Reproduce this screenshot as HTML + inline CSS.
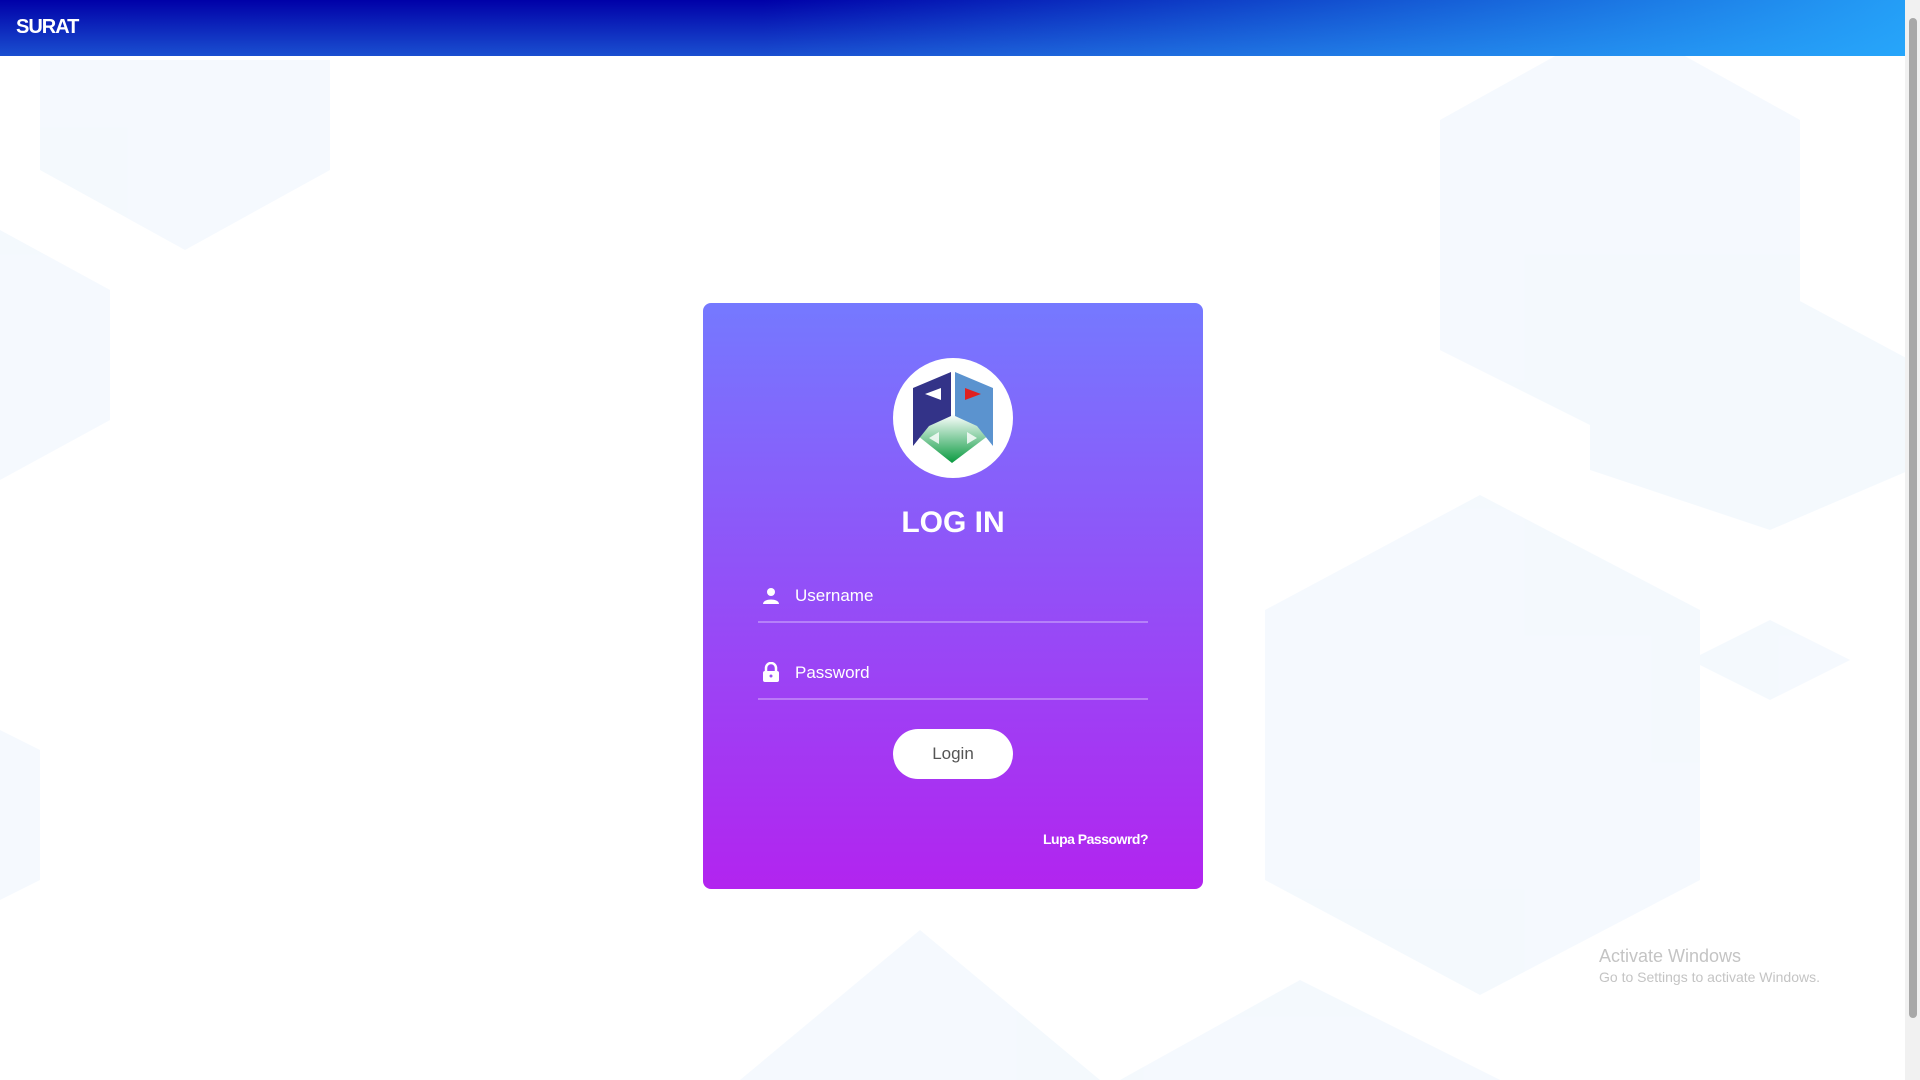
<!DOCTYPE html>
<html><head><meta charset="utf-8"><style>
*{margin:0;padding:0;box-sizing:border-box}
body{width:1920px;height:1080px;overflow:hidden;background:#fff;font-family:"Liberation Sans",sans-serif;position:relative}
.hdr{position:absolute;left:0;top:0;width:1905px;height:56px;background:linear-gradient(180deg,#0000a8 0%,#1a4fd0 100%);}
.hdr:after{content:"";position:absolute;inset:0;background:linear-gradient(90deg,rgba(0,0,0,0) 40%,rgba(40,175,255,.9) 100%)}
.hdr span{position:absolute;left:16px;top:16px;color:#fff;font-weight:bold;font-size:20px;letter-spacing:-1px;z-index:2}
.sb{position:absolute;right:0;top:0;width:15px;height:1080px;background:#f1f1f1}
.sb div{position:absolute;left:4px;top:18px;width:8px;height:1000px;background:#a8a8a8;border-radius:4px}
.card{position:absolute;left:703px;top:303px;width:500px;height:586px;border-radius:8px;background:linear-gradient(180deg,#7579ff 0%,#b224ef 100%)}
.logo{position:absolute;left:190px;top:55px;width:120px;height:120px;border-radius:50%;background:#fff}
h1{position:absolute;left:0;width:500px;top:203px;text-align:center;color:#fff;font-size:30px;font-weight:bold;letter-spacing:0}
.f{position:absolute;left:55px;width:390px;height:2px;background:rgba(255,255,255,.3)}
.lbl{position:absolute;left:92px;color:#fff;font-size:17px}
.btn{position:absolute;left:190px;top:426px;width:120px;height:50px;border-radius:25px;background:#fff;color:#555;font-size:17px;text-align:center;line-height:50px}
.lupa{position:absolute;right:55px;top:528px;color:#fff;font-weight:bold;font-size:14px;letter-spacing:-0.5px}
.aw{position:absolute;left:1599px;top:946px;color:#c4c4c4;font-size:18px}
.aw small{display:block;font-size:14px;margin-top:2px}
</style></head><body>
<svg style="position:absolute;left:0;top:0" width="1920" height="1080">
<g fill="#e8f2fc" opacity=".45">
<polygon points="40,60 330,60 330,170 185,250 40,170"/>
<polygon points="0,230 110,290 110,420 0,480"/>
<polygon points="1590,360 1770,285 1910,360 1910,470 1770,530 1590,470"/>
<polygon points="1265,610 1480,495 1700,610 1700,880 1480,995 1265,880"/>
<polygon points="1440,120 1620,20 1800,120 1800,350 1620,440 1440,350"/>
<polygon points="1120,1080 1300,980 1500,1080"/>
<polygon points="1690,660 1770,620 1850,660 1770,700"/>
<polygon points="0,730 40,750 40,880 0,900"/>
<polygon points="740,1080 920,930 1100,1080"/>
</g>
</svg>
<div class="hdr"><span>SURAT</span></div>
<div class="sb"><div></div></div>
<div class="card">
<div class="logo"><svg width="120" height="120" viewBox="0 0 120 120">
<defs><linearGradient id="g" x1="0" y1="0" x2="0" y2="1"><stop offset="0" stop-color="#fff"/><stop offset="1" stop-color="#0a9a40"/></linearGradient></defs>
<polygon points="20,74 59,56 100,74 59,105" fill="url(#g)"/>
<polygon points="20,30 58,14 58,58 36,68 20,88" fill="#333388"/>
<polygon points="62,14 100,30 100,88 84,68 62,58" fill="#5b93cf"/>
<polygon points="32,36 48,30 48,42" fill="#fff"/>
<polygon points="72,30 88,36 72,42" fill="#e02020"/>
<polygon points="36,80 46,74 46,86" fill="#fff" opacity=".8"/>
<polygon points="74,74 84,80 74,86" fill="#fff" opacity=".8"/>
</svg></div>
<h1>LOG IN</h1>
<svg style="position:absolute;left:59px;top:284px" width="18" height="18" viewBox="0 0 18 18"><circle cx="9" cy="5" r="4" fill="#fff"/><path d="M1,17 C1,11 17,11 17,17Z" fill="#fff"/></svg>
<div class="lbl" style="top:283px">Username</div>
<div class="f" style="top:318px"></div>
<svg style="position:absolute;left:59px;top:359px" width="18" height="20" viewBox="0 0 18 20"><path d="M4,9V6a5,5 0 0 1 10,0V9" stroke="#fff" stroke-width="2.5" fill="none"/><rect x="1" y="9" width="16" height="11" rx="2" fill="#fff"/><circle cx="9" cy="14" r="1.5" fill="#9850f4"/></svg>
<div class="lbl" style="top:360px">Password</div>
<div class="f" style="top:395px"></div>
<div class="btn">Login</div>
<div class="lupa">Lupa Passowrd?</div>
</div>
<div class="aw">Activate Windows<small>Go to Settings to activate Windows.</small></div>
</body></html>
